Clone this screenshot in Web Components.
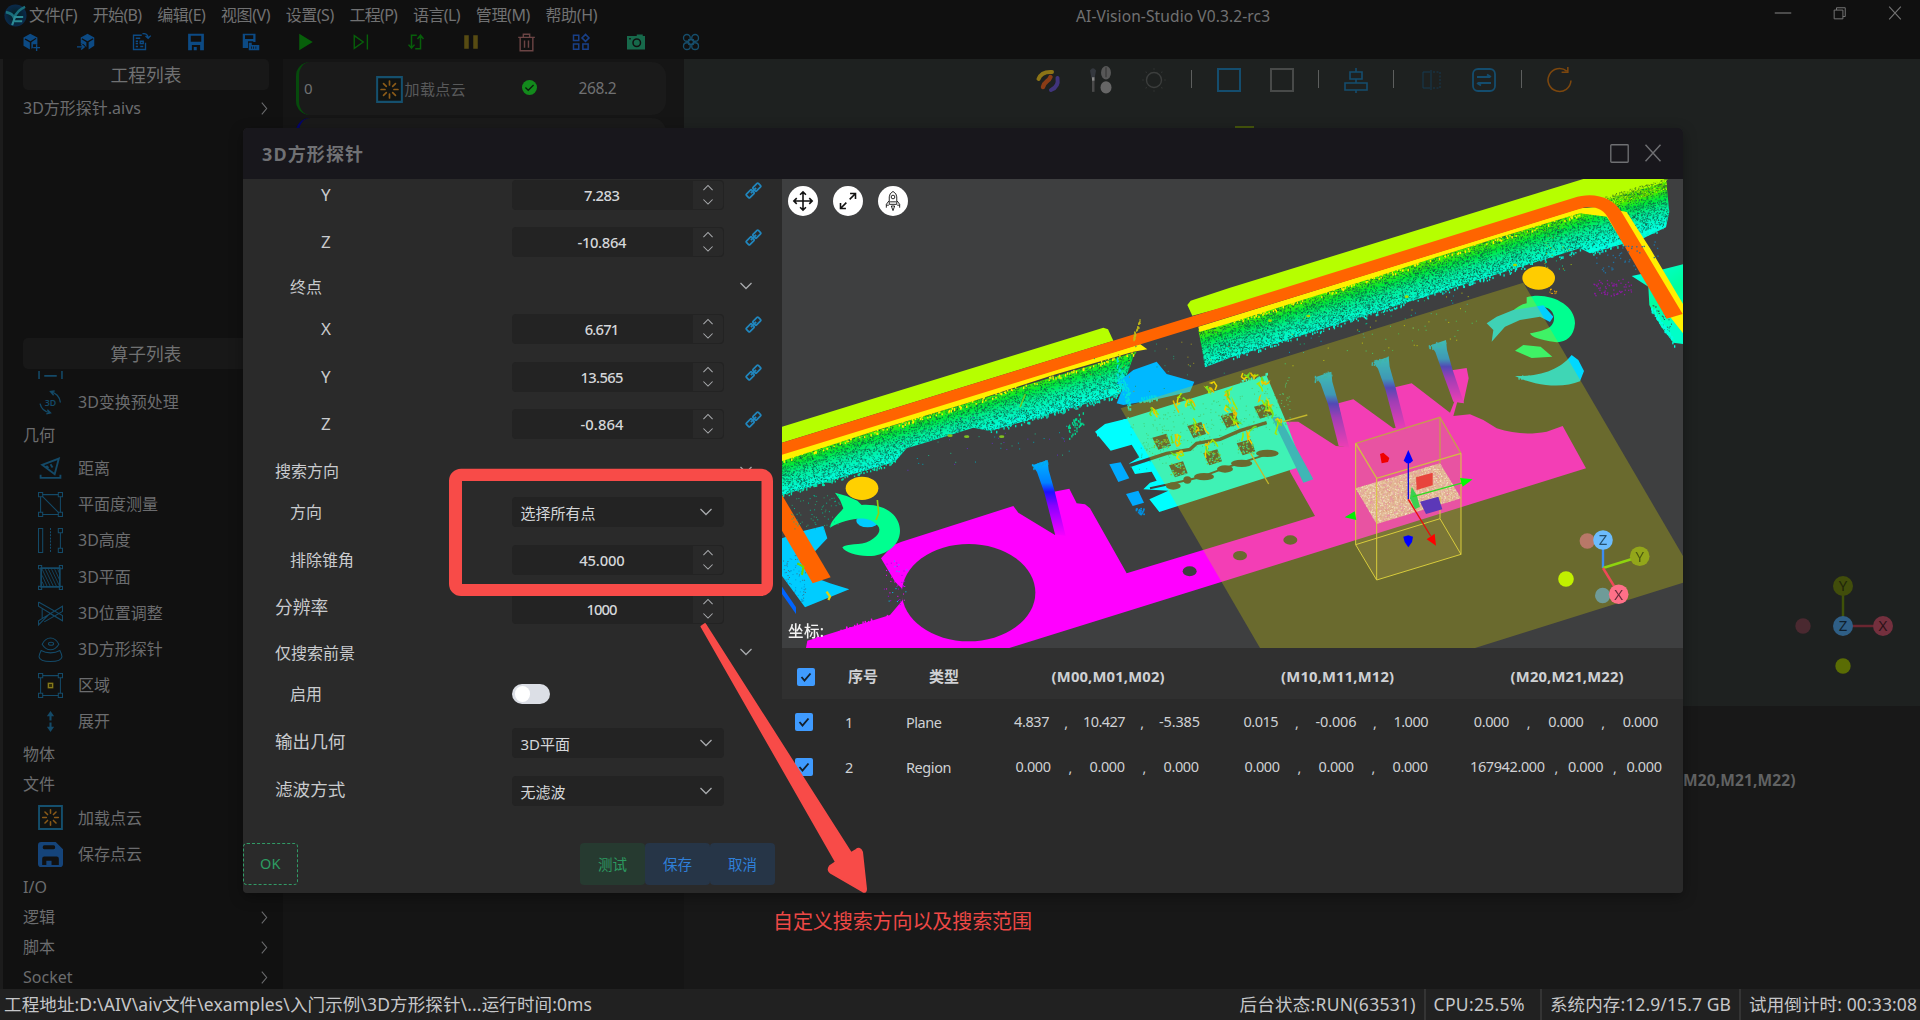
<!DOCTYPE html>
<html lang="zh-CN">
<head>
<meta charset="utf-8">
<title>AI-Vision-Studio</title>
<style>
html,body{margin:0;width:1920px;height:1020px;overflow:hidden;background:#111}
body{font-family:"Noto Sans","Noto Sans CJK SC",sans-serif;font-size:16px;color:#707172}
</style>
</head>
<body>
<vision-studio></vision-studio>
<script>
const define=(name,html,setup)=>customElements.define(name,class extends HTMLElement{
  connectedCallback(){
    if(this.shadowRoot)return;
    const r=this.attachShadow({mode:'open'});
    const a=k=>this.getAttribute(k)||'';
    r.innerHTML=typeof html==='function'?html(a,this):html;
    if(setup)setup(r,this);
  }
});

/* Text whose tracking is tuned to a given width */
define('ui-text','<style>:host{display:inline-block;white-space:pre;line-height:1.3;flex:none}span{display:inline-block}</style><span><slot></slot></span>',(r,el)=>{
  const w=parseFloat(el.getAttribute('w')),s=r.querySelector('span'),n=[...el.textContent].length;
  if(el.hasAttribute('size'))el.style.fontSize=el.getAttribute('size')+'px';
  if(w&&n>1){const ls=(w-s.getBoundingClientRect().width)/(n-1);s.style.letterSpacing=ls+'px';s.style.marginRight=-ls+'px';}
});

const burst=(c,r1,r2,w)=>[0,45,90,135,180,225,270,315].map(d=>`<path d="M12 ${12-r1}V${12-r2}" stroke="${c}" stroke-width="${w}" stroke-linecap="round" transform="rotate(${d} 12 12)"/>`).join('');
const L='fill="none" stroke="currentColor"';
const corners=`<path ${L} d="M.5.5h4v4h-4zM19.500.5h4v4h-4zM.5 19.500h4v4h-4zM19.500 19.500h4v4h-4z"/>`;
const icons={
 logo:'<defs><radialGradient id="g"><stop offset=".3" stop-color="#06222c"/><stop offset="1" stop-color="#0a2a4c"/></radialGradient></defs><circle cx="12" cy="12" r="11.500" fill="url(#g)"/><path d="M2 8.500C5 9 9 10 10.500 14.500C13 9 17 5 22 3" fill="none" stroke="#1b6f7c" stroke-width="2.800"/><path d="M8.500 22L11.500 13.500H20M11 18h8" fill="none" stroke="#2b8a94" stroke-width="2.200"/>',
 boxadd:'<path d="M11 1L2 6v11l8.500 5v-9.500L3.500 8.500 4.500 7.200 11.200 11l7-4.500 1 1.300L12.500 12.300V21l2-1V15h6V6z" fill="currentColor"/><path d="M19.500 15v9M15 19.500h9" stroke="currentColor" stroke-width="1.800"/>',
 boxin:'<path d="M14 1L5 6v8l4 1 3.500 4V12.300L6 8.300l1-1.300 7 4 7-4 1 1.300-6.500 4V22l7.500-5V6z" fill="currentColor"/><path d="M0 18.500h8M5.500 15l4 3.500-4 3.500" fill="none" stroke="currentColor" stroke-width="1.900"/>',
 docs:`<path ${L} stroke-width="1.800" d="M13 3H2v19h16v-9M5 7h6M5 11h3M5 14h3M5 18h3M11 11h4v3h-4zM11 18h4M14 1c4-1 7 1 7.500 5M18 4l3.500 3L25 3.500"/>`,
 floppy:'<path fill="currentColor" fill-rule="evenodd" d="M1.500 1h21v22h-21zM5 3.500v8h14v-8zM6.500 16v7h2.500v-4.500h4V23h4.500v-7z"/>',
 floppy2:'<path fill="currentColor" fill-rule="evenodd" d="M1 1h17v11h-3v-1H8v9H1zM4 3v5h11V3zM9 13h4v3h10v7H9zM12 18v3h1v-3zM15 18v3h1v-3zM18 18v3h1v-3z"/>',
 play:'<path fill="currentColor" d="M3 1l18 11L3 23z"/>',
 next:`<path ${L} stroke-width="1.900" d="M3 3.500L15 12 3 20.500zM20.500 2v20"/>`,
 loop:`<path ${L} stroke-width="2" d="M13 3H6v16M2 15.500L6 20l4-4.500M11 21h7V4M14 8l4-5 4 5"/>`,
 pause:'<path fill="currentColor" d="M3 3h6v18H3zM15 3h6v18h-6z"/>',
 trash:`<path ${L} stroke-width="1.800" d="M1.500 5.500h21M8 5V1.500h8V5M4 6v16.500h16V6M9.500 9.500v9M14.500 9.500v9"/>`,
 apps:`<path ${L} stroke-width="2" d="M2 3h7v7H2zM2 14.500h7v7H2zM14.500 14.500h7v7h-7zM18 1.800l4.700 4.700-4.700 4.700-4.700-4.700z"/>`,
 camera:'<path fill="currentColor" fill-rule="evenodd" d="M0 4h13V2h8v2h3v18H0zM13 7a6 6 0 100 12 6 6 0 000-12zM13 9a4 4 0 110 8 4 4 0 010-8zM3 6.500h2v2H3z"/><circle cx="13" cy="13" r="2.500" fill="currentColor"/>',
 four:`<path ${L} stroke-width="1.800" d="M6.500 2a4.500 4.500 0 110 9 4.500 4.500 0 010-9zM17.500 2a4.500 4.500 0 110 9 4.500 4.500 0 010-9zM6.500 13a4.500 4.500 0 110 9 4.500 4.500 0 010-9zM17.500 13a4.500 4.500 0 110 9 4.500 4.500 0 010-9zM9 9h6v6H9z"/>`,
 chevR:`<path ${L} stroke-width="2" d="M7 1l9 11-9 11"/>`,
 chevD:`<path ${L} stroke-width="2.500" d="M1 6l11 11L23 6"/>`,
 chevU:`<path ${L} stroke-width="2.500" d="M1 17L12 6l11 11"/>`,
 load:`<path fill="#101312" stroke="#15506e" stroke-width="1.800" d="M1 1h22v22H1z"/>${burst('#8a5a18',4,7.500,1.500)}`,
 ok:'<circle cx="12" cy="12" r="12" fill="#138a1c"/><path d="M5.500 12l4.500 4.500L18.500 8" fill="none" stroke="#0c1c0e" stroke-width="2"/>',
 r3d:`<path ${L} stroke-width="1.300" d="M2 13c1 5 5 8 10 9M9 19l3 3-4 1M12 1.500c5 1 9 5 9.500 10.500M15 5l-3-3.500 4-.500"/><text x="12" y="15.500" font-size="8.500" font-weight="600" text-anchor="middle" fill="currentColor">3D</text>`,
 part:`<path ${L} d="M1 16v8M23 16v8M6 21h12" stroke-width="1.500"/>`,
 dist:`<path ${L} stroke-width="1.800" d="M4 8.500L20 2.500l-4 15zM8 9.500l2 2M12 8l2 3M2.500 18v3h19v-3"/>`,
 flat:`${corners}<path ${L} d="M2.500 4.500v15M21.500 4.500v15M4.500 2.500h15M4.500 21.500h15M4 4l16 16"/>`,
 height:`<path ${L} d="M.5.5h4v23h-4zM19.500.5h4v4h-4zM19.500 19.500h4v4h-4zM21.500 4.500v15"/><path ${L} stroke-dasharray="2 1" d="M12 0v24"/>`,
 plane:`<path ${L} d="M.5.5h3v3h-3zM20.500.5h3v3h-3zM.5 20.500h3v3h-3zM20.500 20.500h3v3h-3z"/><path ${L} stroke-width="1.600" d="M3 3h18v18H3z"/><path ${L} stroke-width=".8" d="M4 4l8 17M7 4l8 17M10 4l8 17M13 4l8 17M16 4l5 11M19 4l2 5M4 10l5 11M4 16l2 5"/>`,
 pos:`<path ${L} d="M.5 1l23 13v5l-12-7-11 11v-4l23-14v5L6 20M.5 1v4l23 14M4 8v9"/>`,
 probe:`<path ${L} d="M4 7C8-1 16-1 20 7C16 14 8 14 4 7zM10 6.500a2.500 1.500 0 105 0 2.500 1.500 0 10-5 0M3 13C8 16 16 16 21 13C22 15 23 17 23 19C22 25 2 25 1 19C1 17 2 15 3 13z"/>`,
 area:`${corners}<path ${L} d="M2.500 4.500v15M21.500 4.500v15M4.500 2.500h15M4.500 21.500h15"/><path d="M9 9h6v6H9z" fill="#302c08"/><path d="M10 10h4v4h-4z" fill="none" stroke="#85781c" stroke-width="1.200"/>`,
 expand:'<path fill="currentColor" d="M12 2l3.500 5H13v4h-2V7H8.500zM12 22l3.500-5H13v-4h-2v4H8.500z"/>',
 save:'<path fill="#15447a" fill-rule="evenodd" d="M4 0h13l7 7v14q0 3-3 3H3q-3 0-3-3V3q0-3 3-3zM6 3q-1.500 0-1.500 2T6 7h9q1.500 0 1.500-2T15 3zM6 14q-2 0-2 2v6h4v-4h5v4h7v-6q0-2-2-2z"/>',
 swirl:'<g fill="none" stroke-linecap="round"><path d="M2.500 11C4 7 8 3.500 16 4" stroke="#8c7416" stroke-width="4"/><path d="M7 19C8.500 13 12.500 14 14.500 9" stroke="#8a3c16" stroke-width="4.500"/><path d="M21.500 10C22.500 16 20 20 15 22" stroke="#40347c" stroke-width="4"/></g>',
 brush:'<path d="M1 4q3-4 6 0l-1.500 7h-3z" fill="#34383e"/><path d="M3 12h2.500v11H3z" fill="#4a4a4a"/><path d="M3 10h2.500v3H3z" fill="#888"/><ellipse cx="17" cy="6" rx="5" ry="6" fill="#575757"/><ellipse cx="17" cy="19" rx="5.500" ry="5.500" fill="#666"/><path d="M17 1v9" stroke="#333"/>',
 sun:`<circle cx="12" cy="12" r="7.500" fill="none" stroke="#3c3e3d" stroke-width="1.400"/>${burst('#303231',10.500,11.500,1)}`,
 sq:`<path ${L} stroke-width="2" d="M1 1h22v22H1z"/>`,
 align:`<path ${L} stroke-width="1.600" d="M12 0v4M6 4h12v7H6zM12 11v4M1 15h22v7H1zM12 22v3"/>`,
 mirror:`<path ${L} d="M11 4H4v16h7M12 2v20"/><path ${L} stroke-dasharray="2 1.500" d="M14 4h7v16h-7"/>`,
 swap:`<rect x="1" y="1" width="22" height="22" rx="5" ${L} stroke-width="1.800"/><path ${L} stroke-width="1.900" d="M5 9h13M15 6.500l4 2.500M19 15H6M9 17.500l-4-2.500"/>`,
 rot:`<path ${L} stroke-width="1.500" d="M19 4A11 11 0 1023 13M20 0v5h-6"/>`,
 link:`<g transform="rotate(-45 12 12)" ${L} stroke-width="2.800"><rect x="-1.500" y="8" width="12" height="8" rx="1.500"/><rect x="13.500" y="8" width="12" height="8" rx="1.500"/><path d="M6 12h12"/></g>`,
 move:`<path ${L} stroke-width="1.900" d="M12 1v22M1 12h22M8.500 4.500L12 1l3.500 3.500M8.500 19.500L12 23l3.500-3.500M4.500 8.500L1 12l3.500 3.500M19.500 8.500L23 12l-3.500 3.500"/>`,
 zoomout:`<path ${L} stroke-width="1.900" d="M14 10l7-7M14.500 3H21v6.500M10 14l-7 7M3 14.500V21h6.500"/>`,
 rocket:`<path ${L} stroke-width="1.100" d="M7.500 16V7q0-4 4.500-6.500Q16.500 3 16.500 7v9zM7 12l-3 4v4M17 12l3 4v4M4 17h3M17 17h3M10 18h4l-2 5.500zM12 5a2.200 2.200 0 110 4.400A2.200 2.200 0 0112 5M8.500 13h7"/>`,
 close:`<path ${L} stroke-width="1.900" d="M2 1l20 22M22 1L2 23"/>`,
 min:`<path ${L} stroke-width="1.600" d="M1 12h22"/>`,
 restore:`<path ${L} stroke-width="1.700" d="M2 7h15v15H2zM6 7V3h15v15h-4"/>`,
 max:`<rect x="1" y="1" width="22" height="22" rx="1" ${L} stroke-width="1.700"/>`
};
define('ui-icon',a=>{const s=a('s')||18;return `<style>:host{display:inline-flex;flex:none}svg{overflow:visible;display:block}</style><svg width="${s}" height="${a('h')||s}" viewBox="0 0 24 24" preserveAspectRatio="${a('h')?'none':'xMidYMid'}">${icons[a('name')]}</svg>`});

/* Menu and title */
define('title-bar',()=>`<style>
:host{display:grid;grid-template-columns:1076px auto 1fr;height:28px;align-items:center;background:#101010}
nav{display:flex;align-items:center;padding:3px 0 0 4px}nav ui-icon{margin-right:2px}
nav ui-text{margin-right:15.200px}.t{padding-top:3px}
.w{display:flex;justify-content:flex-end;align-items:center;gap:41px;padding-right:18px;color:#747474;margin-top:-2px}
</style><nav><ui-icon name="logo" s="23"></ui-icon>${[['文件(F)',48.5],['开始(B)',49.5],['编辑(E)',48.5],['视图(V)',49.5],['设置(S)',48.5],['工程(P)',48.5],['语言(L)',47.5],['管理(M)',54.5],['帮助(H)',52]].map(m=>`<ui-text w="${m[1]}">${m[0]}</ui-text>`).join('')}</nav>
<div class="t"><ui-text w="194" size="15.500">AI-Vision-Studio V0.3.2-rc3</ui-text></div>
<div class="w"><ui-icon name="min" s="18"></ui-icon><ui-icon name="restore" s="14"></ui-icon><ui-icon name="close" s="14"></ui-icon></div>`);
define('tool-bar',()=>`<style>:host{display:flex;height:31px;padding-left:3.500px;background:#101010;align-items:center}
span{width:55px;display:flex;justify-content:center;padding-bottom:3px}</style>${[['boxadd','#0c4a84'],['boxin','#0c4a84'],['docs','#0c4a84'],['floppy','#0c4a84'],['floppy2','#0c4a84'],['play','#075f0a'],['next','#075f0a'],['loop','#075f0a'],['pause','#574b12'],['trash','#6b4444'],['apps','#183f87'],['camera','#17694b'],['four','#164e6c']].map(i=>`<span style="color:${i[1]}"><ui-icon name="${i[0]}" s="${i[0]==='trash'?19:18}"></ui-icon></span>`).join('')}`);

/* Left side */
define('panel-title','<style>:host{display:flex;height:31px;box-sizing:border-box;padding-bottom:2px;background:#181818;border-radius:5px;align-items:center;justify-content:center;font-size:17.700px;width:246px;flex:none}</style><slot></slot>');
define('tree-row',a=>`<style>:host{display:flex;height:${a('icon')?36.2:30}px;align-items:center;flex:none;color:#6b6c6e}
.i{width:25px;margin:0 15.500px 0 14.500px;color:#144a68;display:flex;justify-content:center}.c{margin-left:auto;margin-right:-2px;color:#6b6c6e}</style>
${a('icon')?`<span class="i"><ui-icon name="${a('icon')}" s="25"></ui-icon></span>`:''}<ui-text size="16"><slot></slot></ui-text>${a('more')?'<ui-icon class="c" name="chevR" s="13"></ui-icon>':''}`);
define('side-panel',()=>`<style>:host{display:flex;flex-direction:column;width:246px;padding:0 14px 0 20px;border-left:3px solid #1c1c1c;background:#111;overflow:hidden}
.p{height:248px;box-sizing:border-box;padding-top:3px}.l{flex:1;overflow:hidden;margin-top:2px;min-height:0}.l>div{margin-top:-23px;display:flex;flex-direction:column}</style>
<panel-title>工程列表</panel-title><div class="p"><tree-row more="1">3D方形探针.aivs</tree-row></div>
<panel-title>算子列表</panel-title><div class="l"><div>
<tree-row icon="part"></tree-row><tree-row icon="r3d">3D变换预处理</tree-row><tree-row>几何</tree-row>
<tree-row icon="dist">距离</tree-row><tree-row icon="flat">平面度测量</tree-row><tree-row icon="height">3D高度</tree-row><tree-row icon="plane">3D平面</tree-row><tree-row icon="pos">3D位置调整</tree-row><tree-row icon="probe">3D方形探针</tree-row><tree-row icon="area">区域</tree-row><tree-row icon="expand">展开</tree-row>
<tree-row>物体</tree-row><tree-row>文件</tree-row><tree-row icon="load">加载点云</tree-row><tree-row icon="save">保存点云</tree-row>
<tree-row>I/O</tree-row><tree-row more="1">逻辑</tree-row><tree-row more="1">脚本</tree-row><tree-row more="1">Socket</tree-row></div></div>`);

/* Flow column */
define('flow-card',a=>`<style>:host{display:flex;box-sizing:border-box;width:370px;height:53px;border-radius:14px;border-left:3px solid ${a('c')};background:#1a1a1a;align-items:center;padding-left:5px}</style><slot></slot>`);
define('flow-panel',`<style>:host{display:flex;flex-direction:column;gap:3px;width:388px;padding:3px 0 0 13px;background:#151515}
.i{margin:2px 2px 0 63px}.n{color:#58595a;margin-top:3px}.ok{margin:0 42px 3px 56px}</style>
<flow-card c="#064a0c"><ui-text size="15">0</ui-text><ui-icon class="i" name="load" s="27"></ui-icon><ui-text class="n" w="61" size="15">加载点云</ui-text><ui-icon class="ok" name="ok" s="15"></ui-icon><ui-text w="38" size="15.500">268.2</ui-text></flow-card>
<flow-card c="#04046c"></flow-card>`);

define('axis-gizmo',a=>{
 const dim=a('dim');
 const ball=(x,y,r,f,t,c)=>`<circle cx="${x}" cy="${y}" r="${r}" fill="${f}"/>${t?`<text x="${x}" y="${y+5.300}" text-anchor="middle" font-size="15" fill="${c}">${t}</text>`:''}`;
 return '<style>:host{display:block}svg{display:block;overflow:visible}</style>'+(dim?
 `<svg width="100" height="100"><path d="M50 50V12" stroke="#3f5208" stroke-width="2.500"/><path d="M50 50H90" stroke="#6a2630" stroke-width="2.500"/>${ball(50,10,10,'#414d0b','Y','#20260a')}${ball(90,50,10,'#74303e','X','#2c1218')}${ball(10,50,7.700,'#4a2930')}${ball(50,90,7.700,'#5a6c04')}${ball(50,50,10,'#2f5f86','Z','#10202c')}</svg>`:
 `<svg width="100" height="84">${ball(29.3,20,7.700,'#b87868')}<g stroke-width="2.400"><path d="M45 47V25" stroke="#3c8cf0"/><path d="M45 47L74 38" stroke="#8ed40e"/><path d="M45 47L56 65" stroke="#f04858"/></g>${ball(45,19,9.800,'#6cbcfc','Z','#24506e')}${ball(81.7,35.3,9.800,'#93a61a','Y','#4c5a10')}${ball(8,58,7.800,'#c1f000')}${ball(44.7,74.500,7.700,'#6f9b98')}${ball(60.7,73.3,9.800,'#ff7088','X','#6c2c3c')}</svg>`);
});
define('main-view',()=>`<style>:host{display:flex;flex-direction:column;width:1236px;background:#181818}
.v{height:647px;background:#1e2120;box-sizing:border-box;position:relative}
.b{display:flex;gap:29px;padding:7px 0 0 352px;align-items:center}.b i{width:1px;height:18px;background:#5d5f5e;margin:0 -4.200px 1px}
axis-gizmo{position:absolute;left:1109px;top:517px}.f{position:absolute;left:551px;top:67px;width:19px;height:5px;background:#46570c}
.h{padding:63px 0 0 999px;font-weight:700;color:#616263}</style>
<div class="v"><div class="b"><ui-icon name="swirl" s="24"></ui-icon><ui-icon name="brush" s="24" h="27"></ui-icon><ui-icon name="sun" s="24"></ui-icon><i></i><ui-icon style="color:#144d6e" name="sq" s="24"></ui-icon><ui-icon style="color:#484a49" name="sq" s="24"></ui-icon><i></i><ui-icon style="color:#144d6e" name="align" s="24"></ui-icon><i></i><ui-icon style="color:#143a50" name="mirror" s="24"></ui-icon><ui-icon style="color:#144d6e" name="swap" s="24"></ui-icon><i></i><ui-icon style="color:#7c470e" name="rot" s="25"></ui-icon></div>
<div class="f"></div><axis-gizmo dim="1"></axis-gizmo></div><div class="h"><ui-text w="112.500" size="15.500">M20,M21,M22)</ui-text></div>`);

define('status-bar','<style>:host{display:flex;height:31px;background:#212121;align-items:stretch;color:#c6c7c9}span{display:flex;align-items:center;padding-bottom:1px}.a{flex:1;padding-left:4px}.b{border-left:2px solid #343434;box-sizing:border-box;padding-left:8px}</style><span class="a"><ui-text w="588" size="17.500">工程地址:D:\\AIV\\aiv文件\\examples\\入门示例\\3D方形探针\\...运行时间:0ms</ui-text></span><span style="width:184px"><ui-text w="176" size="17.500">后台状态:RUN(63531)</ui-text></span><span class="b" style="width:116.500px"><ui-text w="91" size="17.500">CPU:25.5%</ui-text></span><span class="b" style="width:199px"><ui-text w="181" size="17.500">系统内存:12.9/15.7 GB</ui-text></span><span class="b" style="width:181px"><ui-text w="168" size="17.500">试用倒计时: 00:33:08</ui-text></span>');

/* Form controls */
define('number-box',a=>`<style>:host{display:flex;width:211.500px;height:30px;background:#232323;border-radius:4px;box-sizing:border-box;padding:1px;color:#d4d6d9;font-weight:500}
.v{width:178px;display:flex;align-items:center;justify-content:center;padding:1px 2px 0 0}.s{flex:1;background:#292929;border-radius:0 4px 4px 0;display:flex;flex-direction:column;align-items:center;justify-content:center;gap:4px;color:#a9abae}</style><span class="v"><ui-text w="${a('w')}" size="14.800">${a('v')}</ui-text></span><span class="s"><ui-icon name="chevU" s="10"></ui-icon><ui-icon name="chevD" s="10"></ui-icon></span>`);
define('select-box',`<style>:host{display:flex;width:211.500px;height:30px;background:#232323;border-radius:4px;box-sizing:border-box;align-items:center;justify-content:space-between;padding:0 12px 0 8.500px;color:#d4d6d9;font-size:15px}ui-icon{color:#a9abae}</style><slot></slot><ui-icon name="chevD" s="12"></ui-icon>`);
define('form-row',a=>`<style>:host{display:flex;height:30px;margin-top:${a('m')||0}px;align-items:center;flex:none}
.l{width:269px;box-sizing:border-box;padding-left:${+a('x')-243}px;display:flex;align-items:center;height:30px;padding-bottom:${a('up')||0}px;color:#c9cbce}
.k{margin-left:22px;color:#2186bd;padding-bottom:10px;display:flex}.c{margin-left:228px;color:#a9abae;display:flex;padding-bottom:3px}</style>
<span class="l"><ui-text size="${a('fs')||16}">${a('label')}</ui-text></span><slot></slot>${a('link')?'<span class="k"><ui-icon name="link" s="15"></ui-icon></span>':''}${a('fold')?'<span class="c"><ui-icon name="chevD" s="12"></ui-icon></span>':''}`);
define('ui-switch','<style>:host{display:block;width:38px;height:20px;border-radius:10px;background:#dcdfe6;box-sizing:border-box;padding:2px 3px}i{display:block;width:15px;height:16px;border-radius:8px;background:#fff}</style><i></i>');
define('ui-button',a=>`<style>:host{display:flex;box-sizing:border-box;height:42px;width:${a('w')}px;padding-bottom:2px;border-radius:4px;align-items:center;justify-content:center;font-size:14.500px;color:${a('c')};background:${a('bg')||'none'};border:${a('dash')?'1px dashed #319b66':'0'}}</style><slot></slot>`);
define('param-form',()=>{
 const n=(l,v,w,m,x,o='')=>`<form-row x="${x}" m="${m}" label="${l}" ${o}><number-box v="${v}" w="${w}"></number-box></form-row>`;
 const k='link="1" fs="17"';
 return `<style>:host{display:flex;flex:none;flex-direction:column;width:539px;padding-top:1px;background:#2a2a2a;height:714px;box-sizing:border-box;border-radius:0 0 0 4px}.b{display:flex;margin-top:37px;padding-right:7px}.b ui-button:first-child{margin-right:auto}</style>`+
 n('Y','7.283',36,0,321,k)+n('Z','-10.864',49,17,321,k)+'<form-row x="290" m="15" label="终点" fold="1"></form-row>'+
 n('X','6.671',34.500,12,321,k)+n('Y','13.565',43,18,321,k)+n('Z','-0.864',43,17,321,k)+
 '<form-row x="275" m="17" label="搜索方向" fold="1"></form-row><form-row x="290" m="11" label="方向"><select-box>选择所有点</select-box></form-row>'+
 n('排除锥角','45.000',45.500,18,290)+n('分辨率','1000',31,19,275,'fs="17.800" up="3"')+
 '<form-row x="275" m="14" label="仅搜索前景" fold="1"></form-row><form-row x="290" m="11" label="启用"><ui-switch></ui-switch></form-row>'+
 '<form-row x="275" m="19" label="输出几何" fs="17.600" up="4"><select-box>3D平面</select-box></form-row><form-row x="275" m="18" label="滤波方式" fs="17.600" up="4"><select-box>无滤波</select-box></form-row>'+
 '<div class="b"><ui-button w="54.500" c="#2d9c62" dash="1">OK</ui-button><ui-button w="65" c="#2c9a60" bg="#263a30">测试</ui-button><ui-button w="65" c="#2f7fd8" bg="#263547">保存</ui-button><ui-button w="65" c="#2f7fd8" bg="#263547">取消</ui-button></div>';
});

/* Point cloud: two frames of reference, one 3x unit grid; frame B is shifted 1350 units right of A */
define('point-cloud','<style>:host{display:block;width:901px;height:469px;position:relative;overflow:hidden;background:#3e3f40}canvas{display:block}.t{position:absolute;left:6px;top:7px;display:flex;gap:15px}.t span{width:30px;height:30px;border-radius:50%;background:#fff;color:#111;display:flex;align-items:center;justify-content:center}.c{position:absolute;left:6px;bottom:7px;color:#f2f2f2;font-weight:500;font-size:15.500px}axis-gizmo{position:absolute;left:776px;top:342px}</style><canvas width="901" height="469"></canvas><div class="t"><span><ui-icon name="move" s="20"></ui-icon></span><span><ui-icon name="zoomout" s="20"></ui-icon></span><span><ui-icon name="rocket" s="20"></ui-icon></span></div><ui-text class="c" w="36">坐标:</ui-text><axis-gizmo></axis-gizmo>',r=>{
 const g=r.querySelector('canvas').getContext('2d');
 let seed=7;const rnd=()=>(seed=(seed*16807)%2147483647)/2147483647;
 const BG='#3e3f40';
 const A=()=>g.setTransform(1/3,0,0,1/3,-2,-9),B=()=>g.setTransform(1/3,0,0,1/3,448,-9);
 const poly=(c,s)=>{const p=new Path2D('M'+s+'Z');g.fillStyle=c;g.fill(p);return p;};
 const ell=(c,x,y,a,b)=>{g.fillStyle=c;g.beginPath();g.ellipse(x,y,a,b,0,0,7);g.fill();};
 const lin=(x0,y0,x1,y1,st)=>{const q=g.createLinearGradient(x0,y0,x1,y1);st.forEach(s=>q.addColorStop(s[0],s[1]));return q;};
 const line=(c,w,s)=>{g.strokeStyle=c;g.lineWidth=w;g.stroke(new Path2D('M'+s));};
 const dots=(cs,n,x,y,w,h,sl=0,z=3)=>{for(let i=0;i<n;i++){const u=rnd()*w;g.fillStyle=cs[rnd()*cs.length|0];g.fillRect(x+u,y+rnd()*h+u*sl,z,z);}};
 const grain=(p,cs,n,x,y,w,h,sl)=>{g.save();g.clip(p);dots(cs,n,x,y,w,h,sl);g.restore();};
 /* fringe: scattered points along an edge */
 const fringe=(c,x0,y0,x1,y1,n,d)=>{for(let i=0;i<n;i++){const t=rnd();g.fillStyle=c;g.fillRect(x0+(x1-x0)*t,y0+(y1-y0)*t+(rnd()-.5)*d,4,4+rnd()*4);}};
 const wall=[[0,'#48f000'],[.22,'#00e838'],[.5,'#00ee96'],[.8,'#00f8c8'],[1,'#00ffe0']];
 const dark=['rgba(10,90,70,.75)','rgba(20,80,60,.7)','rgba(20,110,90,.7)'];
 /* walls */
 A();
 let p=poly(lin(6,868,36,966,wall),'6,868 1070,545 1060,560 1020,672 630,783 580,773 470,808 380,835 345,875 6,975');
 grain(p,dark,5200,6,850,1070,130,-.305);
 fringe('#00e8b0',6,975,345,875,70,12);fringe('#00e8c0',630,783,1010,676,80,12);
 poly('#b6ff00','6,770 970,473 984,478 1000,512 6,818');
 B();
 p=poly(lin(0,462,31,562,wall),'-95,480 1050,128 1110,118 1130,80 1308,27 1318,125 1308,172 1240,205 1080,250 1050,235 0,563 -75,592 -85,530');
 grain(p,dark,8200,-95,478,1420,135,-.32);
 fringe('#00f0d0',0,563,1050,236,170,14);fringe('#00f0d0',1080,250,1308,172,40,14);
 const far=poly(lin(1240,280,1359,440,[[0,'#00ffe0'],[.6,'#00ff9c'],[1,'#00ffc8']]),'1205,318 1300,298 1359,283 1359,522 1330,518 1292,468 1258,405 1255,350');
 grain(far,[BG],200,1205,400,120,130,0);fringe('#00ffe0',1262,410,1332,518,60,20);
 poly('#b6ff00','-128,405 -118,392 0,353 1060,27 1308,27 1300,38 1130,88 0,407 -113,437');
 dots(['#6dc800','#b6ff00','#3e7a20'],450,1120,80,190,35,-.3);
 /* rail */
 poly('#fff000','-95,470 1050,115 1110,110 1190,126 1260,235 1359,402 1359,490 1320,440 1130,140 1050,130 800,205 600,268 410,330 200,395 0,459 -92,486');
 fringe('#fff000',0,458,1050,131,120,12);
 A();poly('#fff000','6,850 1080,522 1102,538 1060,545 820,615 560,700 300,778 6,873');fringe('#fff000',6,872,1060,547,130,12);
 B();poly('#ff6400','-1344,818 0,404 1030,84C1090,64 1150,82 1176,128L1358,432 1310,446 1138,150C1120,112 1085,105 1050,116L430,308 0,440 -1344,854');
 /* lower plate */
 A();
 poly('#ff00ff','303,1165 340,1125 365,1115 700,1008 715,1028 825,1095 838,1050 822,965 868,956 890,1000 915,1003 930,1015 1040,1210 1605,1038 1530,905 1510,755 1555,755 1668,828 1700,830 1675,700 1720,688 1840,775 1865,770 1845,652 1895,640 2010,728 2025,690 2005,602 2060,594 2066,625 2050,698 2032,695 2020,738 2070,733 2110,750 2150,775C2200,792 2250,794 2300,785L2348,768 2418,895 1350,1228 688,1434 78,1434 82,1412 330,1335 368,1290 370,1260 345,1235');
 ell(BG,566,1268,200,146);
 fringe('#ff00ff',90,1410,340,1330,30,14);dots(['#a000e0','#00c8ff','#ff00ff'],50,310,1170,70,140);
 ell(BG,1229,1204,21,15);ell(BG,1380,1157,21,14);ell(BG,1531,1110,21,14);
 const pin=(x,y,h)=>{poly(lin(0,y,0,y+h,[[0,'#00b4ff'],[.3,'#0080ff'],[.42,'#1c10ff'],[.6,'#8800ff'],[1,'#f800ff']]),`${x},${y+16} ${x+46},${y} ${x+49},${y+30} ${x+66},${y+90} ${x+100},${y+h} ${x+68},${y+h-5} ${x+36},${y+98} ${x+14},${y+36}`);fringe('#00a8f0',x-6,y+20,x+46,y+3,20,14);};
 pin(757,870,228);pin(1608,605,228);pin(1780,560,222);pin(1952,510,190);
 /* left corner */
 p=poly('#00ccff','6,1105 60,1085 130,1068 142,1105 104,1145 98,1220 150,1240 208,1258 75,1312 6,1218');
 grain(p,['#0098d8','#3e6a80'],90,6,1150,70,150,0);
 poly('#0064ff','6,1250 48,1312 48,1332 6,1272');
 poly('#ff6400','6,975 152,1222 98,1240 6,1082');
 ell('#ffd000',246,955,49,35);ell('#00ccff',263,1053,34,19);
 const hook='165,968 200,978 232,992 245,1005C320,1000 360,1040 360,1082C360,1130 310,1160 262,1158C230,1158 195,1148 187,1132C200,1118 240,1128 270,1112C300,1095 308,1075 285,1060C262,1035 200,1045 150,1073C152,1050 180,1030 190,1015L180,990';
 poly('#00ff90',hook);
 /* board */
 poly('#00b8ff','1010,700 1030,650 1010,640 1060,600 1130,575 1160,612 1243,635 1230,665 1120,690 1030,705');
 fringe('#00e0e0',1010,590,1050,700,90,60);fringe('#00d8e8',1075,690,1130,680,40,16);
 poly('#00ffff','945,785 975,762 1045,745 1380,640 1460,618 1478,660 1520,760 1568,888 1350,958 1138,1026 1108,988 1165,962 1090,958 1110,938 1130,932 1115,905 1065,912 1048,880 1078,862 1055,824 992,842');
 fringe('#00ffff',950,790,1045,748,40,16);fringe('#00ffff',1380,640,1460,618,70,24);
 poly('#00aaff','1475,742 1498,740 1600,928 1570,938');
 poly('#00aaff','988,883 1022,877 1048,925 1015,936');poly('#00aaff','1038,972 1075,962 1092,998 1058,1008');dots(['#0090e0'],22,1066,1012,24,20,0,5);
 dots(['#00d0a8','#20c090'],260,1050,760,480,150,-.3);
 for(const [x,y] of [[1145,815],[1250,780],[1350,750],[1450,722],[1195,898],[1298,862],[1398,832]]){poly(BG,`${x-28},${y-12} ${x+14},${y-24} ${x+28},${y+12} ${x-10},${y+24}`);dots(['#00e0c0','#60c040'],34,x-25,y-20,48,38,0,4);}
 line(BG,10,'1050,886L1160,850 1230,838 1250,820 1320,808 1380,782 1460,758');
 for(const [x,y,w] of [[1180,948,22],[1222,930,12],[1272,920,30],[1335,897,24],[1385,880,32],[1462,850,34]])ell(BG,x,y,w,11);
 line(BG,6,'1110,955L1180,940 1260,922 1340,892 1470,850');
 /* right brackets */
 B();
 poly('#00ff90','890,382C950,364 1036,400 1035,460C1032,505 1000,520 975,516C930,510 905,502 900,490C935,482 975,478 972,440C965,405 930,408 900,416C860,430 830,450 820,475C825,440 860,405 890,400');
 p=poly('#00d0ff','770,460 800,440 850,420 940,406 970,440 960,456 930,440 870,450 825,470 785,515 790,480');
 poly('#00ff90','855,542 880,525 932,530 967,560 905,564');
 poly('#00d8ff','855,618C920,620 985,605 1025,555L1045,570 1062,603 1050,634C1000,655 920,650 855,618');
 fringe('#00d8ff',860,620,900,622,10,10);
 ell('#ffcc00',926,324,49,35);
 dots(['#ffb000'],12,955,350,25,20);
 /* stray points */
 dots(['#00c890','#10b070','#00a0c0','#b8c010'],90,160,440,580,150,-.15);
 dots(['#8a1aa0'],60,1090,330,115,50,-.05,4);dots(['#2070a0'],45,1090,230,200,80,-.1,4);
 dots(['#00c890','#a0c010'],40,930,170,100,130);
 A();dots(['#00b890','#20a070'],70,30,970,150,110);dots(['#00a0b0','#20b080','#6030c0'],60,350,760,520,150,-.1);
 fringe('#00d890',860,790,910,740,40,45);fringe('#c0b818',1060,500,1080,450,26,20);dots(['#209870','#a09820'],50,900,560,450,150,-.2);
 /* search plane */
 B();poly('rgba(214,212,3,.295)','-328,715 880,338 1359,1158 1359,1238 735,1434 90,1434');
 /* solder spikes */
 const spike=(x,y,h)=>{g.lineWidth=4.500;for(let k=0;k<4;k++){g.strokeStyle=['#f0d400','#a8e800','#e8c000','#70e020'][k];g.beginPath();let a=x+rnd()*30-12,b=y+rnd()*14;g.moveTo(a,b);for(let i=0;i<4;i++){a+=rnd()*15-5;b+=(rnd()-.35)*h*.5;g.lineTo(a,b);}g.stroke();}};
 for(const [x,y] of [[-228,710],[-160,678],[-130,685],[-95,760],[-170,790],[-60,640],[-20,660],[50,605],[80,630],[10,735],[100,680],[125,700],[-165,845],[-75,815],[45,780],[150,750],[-5,700]])spike(x,y,42);
 line('#c4b82c',4,'160,755L232,735');line('#c4b82c',4,'62,850L116,942');
 for(const [x,y] of [[855,285],[120,452],[235,438],[530,380]])ell('#a8d800',x,y,6,4);
 A();line('#e0d010',7,'140,1265L150,1280 145,1290');line('#70d800',6,'52,1180L70,1190 66,1215');line('#90d010',5,'292,990L296,1030 288,1050');line('#7ac820',4,'720,712L736,672');
 for(const [x,y] of [[560,800],[665,800],[510,797]])ell('#80c020',x,y,8,4);
 /* probe box */
 B();
 poly('rgba(190,170,90,.2)','377,820 630,742 693,850 693,1153 440,1230 377,1124');
 p=poly('#e2b795','377,955 630,880 693,985 440,1062');grain(p,['#f4e6c4','#e890a8','#f0dcb0','#dca080'],3800,377,945,316,220,-.3);
 const e='#d2bd42';line('#c89a50',4,'377,820L630,742 693,850M630,742V880');line(e,4,'377,820L440,925 693,850');line('#d8cc3c',3,'377,820V1124L440,1230 693,1153V850M440,925V1230M377,1124L630,1046 693,1153M630,980V1046');
 poly('#e8443c','558,922 608,908 608,946 560,960');poly('#5c38b8','570,995 625,980 637,1018 588,1032');
 poly('#3cd050','545,950 560,975 570,1010 555,1018 540,985');
 line('#0808d8',4,'535,988V870');poly('#0000ff','521,872 535,840 549,872 540,880 530,880');
 line('#2cdc20',4,'548,980L700,938');poly('#00ff00','690,924 728,928 698,950');
 line('#e80c0c',4,'535,988L602,1098');poly('#ff0000','590,1108 614,1091 618,1127');
 poly('#0000ff','520,1100 535,1096 549,1100 546,1116 535,1132 524,1116');
 poly('#f00000','450,852 460,848 478,864 474,876 455,880');poly('#00f000','344,1042 374,1024 379,1050');
});

/* Result table */
define('check-box','<style>:host{display:flex;width:18px;height:18px;border-radius:2px;background:#3f9bff;align-items:center;justify-content:center}</style><svg width="12" height="10" viewBox="0 0 12 10"><path d="M1.500 5l3 3.500L10.500 1.500" fill="none" stroke="#14202c" stroke-width="1.900"/></svg>');
define('result-table',()=>{
 const cell=(vals,w,mid)=>`<span class="m" style="width:${w}px;margin-left:${mid-w/2}px;margin-right:${-(mid+w/2)}px">${vals.map(v=>`<ui-text w="${v[1]}" size="14.500">${v[0]}</ui-text>`).join('<b>,</b>')}</span>`;
 const z=['0.000',35.500];
 return `<style>:host{display:block;background:#2a2a2a;height:245px;color:#cfd1d4;border-radius:0 0 4px 0}
 div{display:flex;height:45px;align-items:center;position:relative}.h{height:51px;background:#303030;font-weight:700}
 .m{display:flex;justify-content:space-between;flex:none}.m b{font-weight:400;font-size:14px;padding-top:1px}
 .c{width:66px;box-sizing:border-box;padding-left:13px;flex:none}.h .c{padding:7px 0 0 15px}.n{width:61px;flex:none}.t{width:0;flex:none}.h>ui-text{margin-top:6px}</style>
 <div class="h"><span class="c"><check-box></check-box></span><ui-text w="30" size="15" style="margin-right:51px">序号</ui-text><ui-text w="30" size="15" style="margin-right:92.600px">类型</ui-text><ui-text w="113" size="14.800" style="margin-right:116.500px">(M00,M01,M02)</ui-text><ui-text w="113" size="14.800" style="margin-right:116.500px">(M10,M11,M12)</ui-text><ui-text w="113" size="14.800">(M20,M21,M22)</ui-text></div>
 <div><span class="c" style="width:63px"><check-box></check-box></span><span class="n"><ui-text size="14.500">1</ui-text></span><span class="t"><ui-text w="36" size="14.500">Plane</ui-text></span>${cell([['4.837',35.500],['10.427',42.500],['-5.385',41]],186,201)}${cell([['0.015',35],['-0.006',41],['1.000',35]],185,430)}${cell([z,z,z],184.500,660)}</div>
 <div><span class="c" style="width:63px"><check-box></check-box></span><span class="n"><ui-text size="14.500">2</ui-text></span><span class="t"><ui-text w="45.500" size="14.500">Region</ui-text></span>${cell([z,z,z],183.500,201.300)}${cell([z,z,z],183.500,430.300)}${cell([['167942.000',75],z,z],192,660)}</div>`;
});
define('probe-dialog',`<style>:host{display:block;width:1440px;height:765px;background:#2a2a2a;border-radius:5px;box-shadow:0 4px 14px rgba(0,0,0,.35)}
header{height:51px;background:#18171c;border-radius:5px 5px 0 0;display:flex;align-items:center;padding:2px 21px 0 19px;color:#707174;box-sizing:border-box}
header ui-text{font-weight:700;margin-right:auto}header ui-icon{margin:0 0 3px 15px;color:#6f7073}main{display:flex}section{width:901px;flex:none}</style>
<header><ui-text w="101" size="18">3D方形探针</ui-text><ui-icon name="max" s="19"></ui-icon><ui-icon name="close" s="18"></ui-icon></header>
<main><param-form></param-form><section><point-cloud></point-cloud><result-table></result-table></section></main>`);
define('call-out','<style>:host{display:block;width:1920px;height:1020px;pointer-events:none}svg{display:block}</style><svg width="1920" height="1020"><path fill="#f84b48" fill-rule="evenodd" d="M461 468.700H761a12 12 0 0112 12V584a12 12 0 01-12 12H461a12 12 0 01-12-12V480.700a12 12 0 0112-12zM462 481V584H761.500V481z"/><path fill="#f84b48" stroke="#f84b48" stroke-width="2" stroke-linejoin="round" d="M701.500 626.500L836 862L830 866Q827 870 831 873L863 891.500Q866 892.500 866 889L862 852Q860 847 856 850L851 853L705 624z"/></svg>');

define('vision-studio',`<style>:host{display:block;width:1920px;height:1020px;position:relative;background:#111}
.app{display:flex;flex-direction:column;height:1020px}.main{display:flex;height:930px;flex:none}
probe-dialog{position:absolute;left:243px;top:128px}call-out{position:absolute;left:0;top:0}
.note{position:absolute;left:773px;top:909px;color:#ee4846}</style>
<div class="app"><title-bar></title-bar><tool-bar></tool-bar><div class="main"><side-panel></side-panel><flow-panel></flow-panel><main-view></main-view></div><status-bar></status-bar></div>
<probe-dialog></probe-dialog><ui-text class="note" w="259" size="20">自定义搜索方向以及搜索范围</ui-text><call-out></call-out>`);
</script>
</body>
</html>
